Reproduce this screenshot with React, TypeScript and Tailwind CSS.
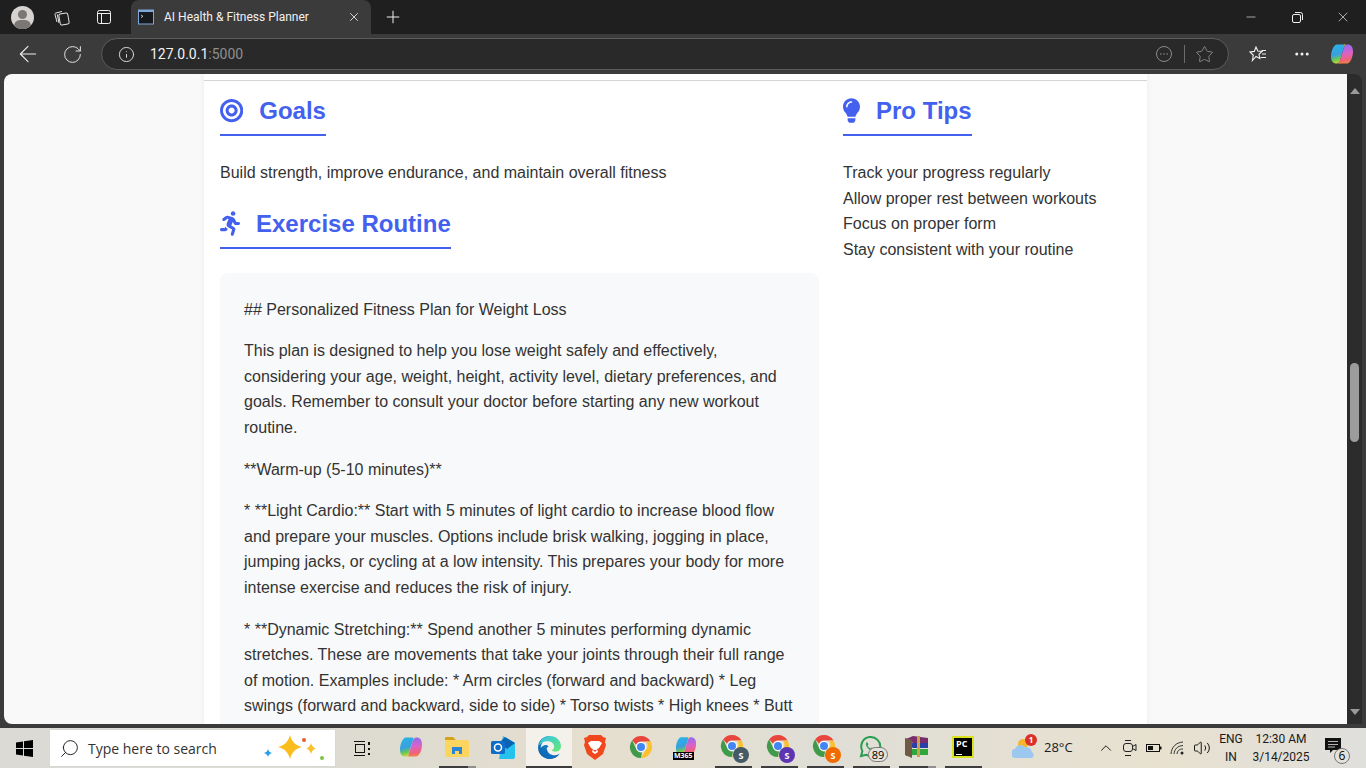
import React from "react";
import { FaBullseye, FaRunning, FaLightbulb } from "react-icons/fa";
import { ArrowLeft, RotateCw, Info, Star, Plus, X, Minus, MoreHorizontal, ChevronUp, Search, Volume2 } from "lucide-react";

const Heading = ({ icon, children }: { icon: React.ReactNode; children: React.ReactNode }) => (
  <h2 className="inline-flex items-center gap-4 border-b-2 border-[#4361ee] pb-2 text-[24px] font-bold leading-[28.800px] text-[#4361ee]">
    {icon}
    <span>{children}</span>
  </h2>
);

const Copilot = ({ s = 24, id = "a" }: { s?: number; id?: string }) => (
  <svg width={s} height={s} viewBox="0 0 24 24">
    <defs>
      <linearGradient id={`cpa${id}`} x1="0.2" y1="0" x2="0.4" y2="1">
        <stop offset="0" stopColor="#27b4e6" />
        <stop offset="0.55" stopColor="#3aa0e0" />
        <stop offset="0.8" stopColor="#6cc94f" />
        <stop offset="1" stopColor="#c4d93f" />
      </linearGradient>
      <linearGradient id={`cpb${id}`} x1="0.5" y1="0" x2="0.6" y2="1">
        <stop offset="0" stopColor="#8f6cf0" />
        <stop offset="0.45" stopColor="#d963c8" />
        <stop offset="0.8" stopColor="#f0607a" />
        <stop offset="1" stopColor="#f68a3c" />
      </linearGradient>
    </defs>
    <path d="M7 2.500h6.500c1 0 1.200.7.900 1.500L10 18.500c-.8 2.300-1.800 3-3.500 3-3.500 0-5.500-2.500-5.500-7 0-5 2.500-12 6-12z" fill={`url(#cpa${id})`} />
    <path d="M17 21.500h-6.500c-1 0-1.200-.7-.9-1.500L14 5.500c.8-2.300 1.800-3 3.500-3 3.500 0 5.500 2.500 5.500 7 0 5-2.500 12-6 12z" fill={`url(#cpb${id})`} />
    <path d="M14.300 4.200c.5-1.100 1.400-1.700 2.700-1.700h-4c.8 0 1.400.6 1.300 1.700z" fill="#f7c843" />
    <path d="M9.700 19.800c-.5 1.100-1.400 1.700-2.700 1.700h4c-.8 0-1.400-.6-1.300-1.700z" fill="#f7a83c" />
  </svg>
);

const Chrome = ({ s = 24 }: { s?: number }) => (
  <svg width={s} height={s} viewBox="0 0 24 24">
    <path d="M12 1a11 11 0 0 1 9.530 5.500H12a5.500 5.500 0 0 0-5 3.200L3.200 5.300A11 11 0 0 1 12 1z" fill="#e8453c" />
    <path d="M21.530 6.500A11 11 0 0 1 12 23l4.700-8.200a5.500 5.500 0 0 0 0-8.300z" fill="#fbc02d" />
    <path d="M12 23A11 11 0 0 1 3.200 5.300L7.500 14.800a5.500 5.500 0 0 0 5.500 2.600z" fill="#3f9b4a" />
    <circle cx="12" cy="12" r="5" fill="#fff" />
    <circle cx="12" cy="12" r="4" fill="#4285f4" />
  </svg>
);

const ChromeProfile = ({ color }: { color: string }) => (
  <div className="relative h-[26px] w-[26px]">
    <Chrome s={24} />
    <div
      className="absolute -bottom-[3px] -right-[3px] flex h-[16px] w-[16px] items-center justify-center rounded-full text-[9px] font-bold leading-none text-white"
      style={{ backgroundColor: color }}
    >
      S
    </div>
  </div>
);

const Edge = () => (
  <svg width="25" height="25" viewBox="0 0 24 24">
    <defs>
      <linearGradient id="edg1" x1="0" y1="1" x2="1" y2="0">
        <stop offset="0" stopColor="#0c59a4" />
        <stop offset="1" stopColor="#1b9de2" />
      </linearGradient>
      <linearGradient id="edg2" x1="0" y1="0" x2="1" y2="1">
        <stop offset="0" stopColor="#35c1f1" />
        <stop offset="1" stopColor="#66eb6e" />
      </linearGradient>
    </defs>
    <path d="M12 1C5.500 1 1 6 1 12c0 6.500 5 11 11 11 2.500 0 5-1 6.500-2.200-3 .8-8-.2-9.500-3.500-1-2.500 0-5 2-6.300C9 8 5 10 3.500 12.500 4 6.500 8 3 12 3z" fill="url(#edg1)" />
    <path d="M1.500 11C2.500 5.500 7 1 12.500 1 18.500 1 23 5.500 23 11c0 3-2.500 5-5.500 5-1.500 0-3-.5-3.500-1.300 1.500-.5 2.500-1.700 2.500-3.200 0-3.500-3-5.500-6-5.500-4 0-7.500 2-9 5z" fill="url(#edg2)" />
    <path d="M9.500 13c0 4 4 6.800 8 6.500 1.500-.1 3-.7 4-1.700-1 3-5 5.200-9.500 5.200-2 0-5-1.500-5-5 0-2.500 1-4 2.500-5z" fill="#0f6cbd" />
  </svg>
);

const Slot = ({ children, bar, light, active }: { children: React.ReactNode; bar?: boolean; light?: boolean; active?: boolean }) => (
  <div className={`flex h-full w-[46px] shrink-0 flex-col items-center ${active ? "bg-[#f3f1ea]" : ""}`}>
    <div className="flex flex-1 items-center justify-center">{children}</div>
    <div className={`flex h-[2px] ${active ? "w-full" : "w-[37px]"}`}>
      {bar && <div className="h-full flex-1 bg-[#3d3d3d]" />}
      {light && <div className="h-full w-[8px] bg-[#8f8f8f]" />}
    </div>
  </div>
);

const paragraphs = [
  "## Personalized Fitness Plan for Weight Loss",
  "This plan is designed to help you lose weight safely and effectively, considering your age, weight, height, activity level, dietary preferences, and goals. Remember to consult your doctor before starting any new workout routine.",
  "**Warm-up (5-10 minutes)**",
  "* **Light Cardio:** Start with 5 minutes of light cardio to increase blood flow and prepare your muscles. Options include brisk walking, jogging in place, jumping jacks, or cycling at a low intensity. This prepares your body for more intense exercise and reduces the risk of injury.",
  "* **Dynamic Stretching:** Spend another 5 minutes performing dynamic stretches. These are movements that take your joints through their full range of motion. Examples include: * Arm circles (forward and backward) * Leg swings (forward and backward, side to side) * Torso twists * High knees * Butt kicks",
];

const tips = [
  "Track your progress regularly",
  "Allow proper rest between workouts",
  "Focus on proper form",
  "Stay consistent with your routine",
];

export default function App() {
  return (
    <div className="flex h-[768px] w-[1366px] flex-col overflow-hidden bg-[#3b3b3b] font-['Liberation_Sans',Arial,sans-serif]">
      {/* Tab strip */}
      <div className="flex h-[34px] shrink-0 items-end bg-[#1f1f1f]">
        <div className="flex h-[34px] w-[131px] shrink-0 items-center pl-[11px]">
          <div className="relative h-[23px] w-[23px] overflow-hidden rounded-full bg-[#d6d3d0]">
            <div className="absolute left-[7px] top-[4px] h-[9px] w-[9px] rounded-full bg-[#7b7775]" />
            <div className="absolute left-[3px] top-[14px] h-[12px] w-[17px] rounded-full bg-[#7b7775]" />
          </div>
          <svg className="ml-[19px]" width="17" height="17" viewBox="0 0 17 17" fill="none" stroke="#e4e4e4" strokeWidth="1">
            <rect x="6.500" y="4.500" width="9" height="11" rx="1.500" transform="rotate(-10 11 10)" />
            <path d="M4 13 2 5.500c-.2-.8.2-1.300 1-1.500L9 2.500M6 14 4.300 5.500" />
          </svg>
          <svg className="ml-[27px]" width="14" height="14" viewBox="0 0 14 14" fill="none" stroke="#f0f0f0" strokeWidth="1">
            <rect x="0.500" y="0.500" width="13" height="13" rx="2" />
            <path d="M0.500 3.500h13M4.500 3.500v10" />
          </svg>
        </div>
        <div className="flex h-[34px] w-[240px] shrink-0 items-center rounded-t-[8px] bg-[#3b3b3b] pl-[7px] pr-[10px]">
          <svg width="16" height="16" viewBox="0 0 16 16">
            <rect x="0" y="0.500" width="16" height="15" fill="#7fa6d8" />
            <rect x="1" y="3" width="14" height="11.500" fill="#15181d" />
            <path d="M3 6l2 1.300L3 8.600" stroke="#ddd" strokeWidth="0.800" fill="none" />
          </svg>
          <span className="ml-[10px] flex-1 text-[12px] text-[#f0f0f0] font-['Roboto',sans-serif]">AI Health &amp; Fitness Planner</span>
          <X size={14} color="#e8e8e8" strokeWidth={1.500} />
        </div>
        <div className="flex h-[34px] w-[44px] items-center justify-center">
          <Plus size={20} color="#f0f0f0" strokeWidth={1.200} />
        </div>
        <div className="flex-1" />
        <div className="flex h-[34px] items-center text-[#f0f0f0]">
          <div className="flex w-[46px] justify-center"><Minus size={14} strokeWidth={1.100} /></div>
          <div className="flex w-[46px] justify-center">
            <svg width="11" height="11" viewBox="0 0 11 11" fill="none" stroke="#f0f0f0" strokeWidth="1">
              <rect x="0.500" y="2.500" width="8" height="8" rx="1.500" />
              <path d="M3 .5h5.500a2 2 0 0 1 2 2V8" />
            </svg>
          </div>
          <div className="flex w-[46px] justify-center"><X size={16} strokeWidth={1} /></div>
        </div>
      </div>

      {/* Toolbar */}
      <div className="flex h-[40px] shrink-0 items-center">
        <div className="flex w-[56px] shrink-0 justify-center"><ArrowLeft size={26} color="#f0f0f0" strokeWidth={1} /></div>
        <div className="flex w-[32px] shrink-0 justify-center"><RotateCw size={21} color="#f0f0f0" strokeWidth={1.050} /></div>
        <div className="ml-[13px] flex h-[32px] w-[1128px] shrink-0 items-center rounded-full border border-[#5c5c5c] bg-[#292929] pl-[16px] pr-[14px]">
          <Info size={17} color="#e6e6e6" strokeWidth={1.300} />
          <span className="ml-[15px] flex-1 text-[14px] text-[#f2f2f2] font-['Roboto',sans-serif]">127.0.0.1<span className="text-[#8f8f8f]">:5000</span></span>
          <svg width="16" height="16" viewBox="0 0 16 16" fill="none" stroke="#8a8a8a" strokeWidth="1">
            <circle cx="8" cy="8" r="7.500" />
            <circle cx="4.800" cy="8" r="0.800" fill="#8a8a8a" stroke="none" />
            <circle cx="8" cy="8" r="0.800" fill="#8a8a8a" stroke="none" />
            <circle cx="11.200" cy="8" r="0.800" fill="#8a8a8a" stroke="none" />
          </svg>
          <div className="ml-[12px] h-[18px] w-px bg-[#6b6b6b]" />
          <Star size={19} color="#8f8f8f" strokeWidth={1.100} className="ml-[10px]" />
        </div>
        <div className="flex w-[57px] shrink-0 justify-center">
          <svg width="18" height="17" viewBox="0 0 18 17" fill="none" stroke="#f0f0f0" strokeWidth="1.100">
            <path d="M7 1l1.800 4 4.200.4-3 2.900.8 4.200L7 10.500 3.400 14.500l.9-5.200L1 6l4.300-.6z" />
            <path d="M12.500 4.500H17M13 8h4M11.500 11.500H17" />
          </svg>
        </div>
        <div className="flex w-[32px] shrink-0 justify-center"><MoreHorizontal size={18} color="#f0f0f0" strokeWidth={2} /></div>
        <div className="flex w-[48px] shrink-0 justify-center"><Copilot s={24} id="t" /></div>
      </div>

      {/* Viewport */}
      <div className="flex h-[650px] shrink-0 pl-[4px] pr-[4px]">
        <div className="flex h-full w-[1343px] shrink-0 justify-center overflow-hidden rounded-l-[8px] bg-[#f9f9f9]">
          <main className="h-[700px] w-[943px] shrink-0 bg-white pt-[6px] shadow-[0_0_6px_rgba(0,0,0,0.06)]">
            <div className="h-px bg-[#d4d4d4]" />
            <div className="grid grid-cols-[599px_288px] gap-x-[24px] px-[16px] pt-[16.200px] text-[16px] leading-[25.600px] text-[#333333]">
              <section>
                <Heading icon={<FaBullseye className="-mt-[2px] h-[25px] w-[23.250px] shrink-0" />}>Goals</Heading>
                <p className="mb-[24.200px] mt-[24px]">Build strength, improve endurance, and maintain overall fitness</p>
                <Heading icon={<FaRunning className="-mt-[2px] h-[25px] w-[20px] shrink-0" />}>Exercise Routine</Heading>
                <div className="mt-[24px] rounded-[8px] bg-[#f8f9fa] p-[24px]">
                  {paragraphs.map((p) => (
                    <p key={p} className="mb-[16px]">{p}</p>
                  ))}
                </div>
              </section>
              <section>
                <Heading icon={<FaLightbulb className="-mt-[2px] h-[25px] w-[17px] shrink-0" />}>Pro Tips</Heading>
                <ul className="mt-[24px]">
                  {tips.map((t) => (
                    <li key={t}>{t}</li>
                  ))}
                </ul>
              </section>
            </div>
          </main>
        </div>
        {/* Scrollbar */}
        <div className="flex w-[15px] shrink-0 flex-col items-center rounded-tr-[8px] bg-[#2c2c2c] pt-[14px] pb-[9px]">
          <svg width="10" height="6" viewBox="0 0 10 6" className="shrink-0"><path d="M5 0l5 6H0z" fill="#9a9a9a" /></svg>
          <div className="mt-[269px] h-[79px] w-[9px] shrink-0 rounded-full bg-[#9c9c9c]" />
          <div className="flex-1" />
          <svg width="10" height="6" viewBox="0 0 10 6" className="shrink-0"><path d="M5 6l5-6H0z" fill="#9a9a9a" /></svg>
        </div>
      </div>

      <div className="h-[4px] shrink-0 bg-[#3b3b3b]" />

      {/* Taskbar */}
      <div className="flex h-[40px] shrink-0 items-stretch bg-[linear-gradient(90deg,#dbdad6_0%,#dedbd0_30%,#e6dfcf_45%,#dfded6_60%,#e8e1d0_85%,#dfdfdc_100%)] text-[#1a1a1a] font-['Open_Sans',sans-serif]">
        <div className="flex w-[49px] shrink-0 items-center justify-center">
          <svg width="17" height="17" viewBox="0 0 17 17" fill="#000">
            <path d="M0 2.400 7 1.400v6.600H0zM8 1.200 17 0v8H8zM0 9h7v6.600l-7-1zM8 9h9v8l-9-1.200z" />
          </svg>
        </div>
        <div className="my-[1px] flex w-[287px] shrink-0 items-center border border-[#d8d8d8] bg-white pl-[9px]">
          <Search size={21} strokeWidth={1.050} color="#111" className="-scale-x-100" />
          <span className="ml-[8px] flex-1 text-[14px] text-[#333]">Type here to search</span>
          <svg className="mr-[9px]" width="62" height="30" viewBox="0 0 62 30">
            <path d="M26 2c2 7 5 10 12 12-7 2-10 5-12 12-2-7-5-10-12-12 7-2 10-5 12-12z" fill="#fbbd1e" />
            <path d="M47 10c1 3 2 4.500 5 5.500-3 1-4 2.500-5 5.500-1-3-2-4.500-5-5.500 3-1 4-2.500 5-5.500z" fill="#fbc02d" />
            <path d="M4 16c.6 2 1.200 3 4 4-2.800 1-3.400 2-4 4-.6-2-1.200-3-4-4 2.800-1 3.400-2 4-4z" fill="#2a9de8" />
            <circle cx="40" cy="7" r="2" fill="#ea5a2a" />
            <circle cx="58" cy="25" r="2" fill="#7cc441" />
          </svg>
        </div>
        <div className="flex w-[52px] shrink-0 items-center justify-center">
          <svg width="16" height="17" viewBox="0 0 16 17" fill="none" stroke="#111" strokeWidth="1">
            <path d="M0 1.500h11M0 15.500h11" />
            <rect x="1.500" y="4.500" width="9" height="8" />
            <path d="M15 2v3M15 8v2M15 13v2" strokeWidth="2" />
          </svg>
        </div>
        <Slot><Copilot s={24} id="b" /></Slot>
        <Slot bar light>
          <svg width="24" height="22" viewBox="0 0 24 22">
            <path d="M0 2a1 1 0 0 1 1-1h7l3 3h-11z" fill="#d6a21a" />
            <path d="M0 4h22a2 2 0 0 1 2 2v15H2a2 2 0 0 1-2-2z" fill="#fcd55f" />
            <path d="M7 11h10v7h-3v-3h-4v3H7z" fill="#2b86d8" />
          </svg>
        </Slot>
        <Slot>
          <svg width="24" height="23" viewBox="0 0 24 23">
            <path d="M12 0l12 7v14a2 2 0 0 1-2 2H8z" fill="#25c2ee" />
            <path d="M14 1l10 6-8 6-8-6z" fill="#0b63b3" />
            <rect x="0" y="5" width="14" height="13" rx="1.500" fill="#0f6cc8" />
            <circle cx="7" cy="11.500" r="3.500" fill="none" stroke="#fff" strokeWidth="1.600" />
          </svg>
        </Slot>
        <Slot bar active><Edge /></Slot>
        <Slot>
          <svg width="22" height="25" viewBox="0 0 22 25">
            <path d="M5 0h12l2 2 3 1-1 4 1 3-3 9-8 6-8-6-3-9 1-3-1-4 3-1z" fill="#f1471d" />
            <path d="M7 6h8l3 2-3 5-2 1 1 3-3 2-3-2 1-3-2-1-3-5z" fill="#fff" />
            <path d="M9 15h4l-2 2z" fill="#f1471d" />
          </svg>
        </Slot>
        <Slot><Chrome s={24} /></Slot>
        <Slot>
          <div className="relative h-[24px] w-[24px]">
            <Copilot s={22} id="m" />
            <div className="absolute -left-[2px] bottom-[-1px] bg-black px-[1px] text-[7px] font-bold leading-[8px] text-white">M365</div>
          </div>
        </Slot>
        <Slot bar><ChromeProfile color="#455a64" /></Slot>
        <Slot bar><ChromeProfile color="#5e35b1" /></Slot>
        <Slot bar><ChromeProfile color="#ef6c00" /></Slot>
        <Slot bar>
          <div className="relative h-[24px] w-[26px]">
            <svg width="24" height="24" viewBox="0 0 24 24" fill="none">
              <path d="M3 21l1.400-5A9.500 9.500 0 1 1 8 19.700z" stroke="#2a9d52" strokeWidth="2" />
              <path d="M8.500 7.500c-1 1-.8 3 1 5.300 2 2.400 4 3.200 5.500 2.700l1-1.500-2.500-1.500-1 1c-1-.4-2.500-2-3-3l.9-1-1.200-2.500z" fill="#2a9d52" />
            </svg>
            <div className="absolute -bottom-[3px] -right-[4px] flex h-[15px] w-[20px] items-center justify-center rounded-full border border-[#777] bg-[#e4e2da] text-[11px] leading-none text-black">89</div>
          </div>
        </Slot>
        <Slot bar light>
          <svg width="24" height="22" viewBox="0 0 24 22">
            <path d="M1 3l7-3 15 2v5l-15 0z" fill="#7b2d6b" />
            <path d="M1 8l7-1h15v5H8z" fill="#2a3fa8" />
            <path d="M1 14l7-1h15v6H8l-7 1z" fill="#2ea83a" />
            <path d="M0 2l7 2v18l-7-3z" fill="#6e5a45" />
            <rect x="12" y="0" width="3" height="21" fill="#c9a24a" />
          </svg>
        </Slot>
        <Slot bar>
          <div className="flex h-[22px] w-[22px] flex-col justify-between border-2 border-[#d8e21f] bg-black px-[2px] py-[1px]">
            <span className="text-[9px] font-bold leading-[10px] text-white">PC</span>
            <div className="h-[1px] w-[6px] bg-white" />
          </div>
        </Slot>

        <div className="flex flex-1 items-center justify-start pl-[26px]">
          <div className="relative h-[24px] w-[24px]">
            <svg width="24" height="24" viewBox="0 0 24 24">
              <circle cx="11" cy="8" r="5" fill="#f7b42c" />
              <path d="M3 22a4.500 4.500 0 0 1 0-9 6 6 0 0 1 10-2 6 6 0 0 1 7 5 3.500 3.500 0 0 1 0 6z" fill="#9cc8ef" />
            </svg>
            <div className="absolute -right-[1px] -top-[2px] flex h-[12px] w-[12px] items-center justify-center rounded-full bg-[#d9312a] text-[8px] font-bold leading-none text-white">1</div>
          </div>
          <span className="ml-[8px] text-[13px]">28°C</span>
        </div>

        <div className="flex w-[271px] shrink-0 items-center">
          <div className="flex w-[22px] justify-center"><ChevronUp size={18} strokeWidth={1.300} /></div>
          <div className="flex w-[25px] justify-center">
            <svg width="16" height="18" viewBox="0 0 16 18" fill="none" stroke="#222" strokeWidth="1">
              <rect x="1.500" y="4.500" width="9" height="8" rx="2.500" />
              <path d="M10.500 7.500 14 5.500v6l-3.500-2M3 1.500h6M3 16.500h6" />
            </svg>
          </div>
          <div className="flex w-[24px] justify-center">
            <svg width="16" height="10" viewBox="0 0 16 10" fill="none" stroke="#111" strokeWidth="1">
              <rect x="0.500" y="1.500" width="13" height="7" />
              <rect x="2" y="3" width="5" height="4" fill="#111" stroke="none" />
              <rect x="14" y="3.500" width="1.500" height="3" fill="#111" stroke="none" />
            </svg>
          </div>
          <div className="flex w-[24px] justify-center">
            <svg width="16" height="14" viewBox="0 0 16 14" fill="none" stroke="#333" strokeWidth="1">
              <path d="M1 13C1.500 6 6 1.500 13 1M4 13c.5-5 3.500-8 9-8.500M7 13c.3-3 2-5 6-5" />
              <circle cx="12" cy="12" r="1.500" fill="#222" stroke="none" />
            </svg>
          </div>
          <div className="flex w-[24px] justify-center"><Volume2 size={18} strokeWidth={1.300} color="#111" /></div>
          <div className="flex w-[34px] flex-col items-center text-[12px] leading-[18px] font-['Roboto',sans-serif]">
            <span>ENG</span>
            <span>IN</span>
          </div>
          <div className="flex w-[66px] flex-col items-center text-[12px] leading-[18px] font-['Roboto',sans-serif]">
            <span>12:30 AM</span>
            <span>3/14/2025</span>
          </div>
          <div className="ml-[11px] flex h-full flex-1 items-center">
            <div className="relative h-[20px] w-[20px]">
              <svg width="17" height="16" viewBox="0 0 17 16"><path d="M0 0h16v12H8l-3 3v-3H0z" fill="#111" /><path d="M3 3.500h10M3 6.500h10M3 9h7" stroke="#ddd" strokeWidth="0.800" /></svg>
              <div className="absolute -bottom-[6px] -right-[5px] flex h-[16px] w-[16px] items-center justify-center rounded-full border border-[#777] bg-[#e4e2da] text-[12px] leading-none text-black">6</div>
            </div>
          </div>
        </div>
      </div>
    </div>
  );
}
